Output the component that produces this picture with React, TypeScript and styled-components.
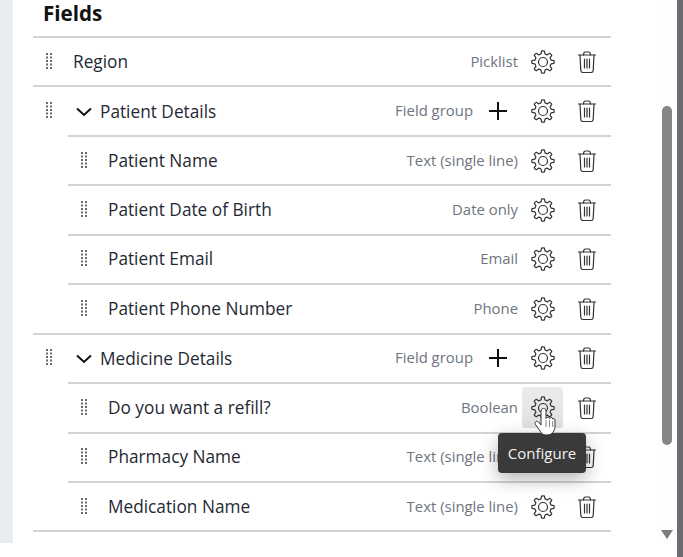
import React from 'react';
import styled, { createGlobalStyle } from 'styled-components';

const Global = createGlobalStyle`
  html, body { margin: 0; padding: 0; background: #fff; overflow: hidden; }
  body { font-family: "Open Sans", "Noto Sans", sans-serif; }
`;

const Page = styled.div`
  position: relative;
  width: 683px;
  height: 557px;
  display: flex;
  overflow: hidden;
  background: #fff;
`;
const SideBand = styled.div`
  width: 13px;
  height: 543px;
  flex: none;
  background: #e8edf2;
`;
const Main = styled.main`
  width: 598px;
  flex: none;
  padding: 0 0 0 20px;
  box-sizing: border-box;
`;
const Title = styled.h2`
  margin: 0;
  height: 36px;
  padding: 0 0 0 10px;
  font-size: 20.6px;
  line-height: 26px;
  font-weight: 700;
  color: #111;
`;
const List = styled.div`
  display: flex;
  flex-direction: column;
`;
const Row = styled.div<{ $nested?: boolean }>`
  height: 49.45px;
  box-sizing: border-box;
  margin-left: ${p => (p.$nested ? 35 : 0)}px;
  border-top: 2px solid #d3d3d3;
  display: flex;
  align-items: center;
  position: relative;
`;
const EndLine = styled.div`
  height: 2px;
  background: #d3d3d3;
`;
const Handle = styled.svg`
  width: 8px;
  height: 18px;
  flex: none;
  margin-left: 12px;
  margin-top: -2px;
`;
const Chevron = styled.svg`
  width: 18px;
  height: 10px;
  flex: none;
  margin-left: 21.500px;
  margin-top: 2px;
`;
const Name = styled.span<{ $group?: boolean }>`
  margin-left: ${p => (p.$group ? 7.5 : 20)}px;
  margin-top: ${p => (p.$group ? 2 : 0)}px;
  font-size: 17.25px;
  line-height: 24px;
  color: #1f2933;
  flex: 1;
  white-space: nowrap;
`;
const TypeLabel = styled.span`
  margin-top: -2px;
  font-size: 14.9px;
  line-height: 22px;
  color: #6f7580;
  white-space: nowrap;
`;
const Actions = styled.div`
  display: flex;
  align-items: center;
  flex: none;
  margin-right: 4px;
`;
const AddBtn = styled.span`
  width: 50px;
  display: flex;
  justify-content: center;
  margin-right: -5px;
`;
const IconBtn = styled.span<{ $hover?: boolean }>`
  width: 41px;
  height: 41px;
  border-radius: 3px;
  display: flex;
  align-items: center;
  justify-content: center;
  background: ${p => (p.$hover ? 'linear-gradient(#ececec, #e0e0e0)' : 'transparent')};
  margin-left: 4px;
  & + & {
    margin-left: 3px;
  }
`;
const Scrollbar = styled.div`
  position: relative;
  width: 18px;
  height: 544px;
  margin-left: 47px;
  flex: none;
  background: #fdfdfd;
`;
const Thumb = styled.div`
  position: absolute;
  left: 4px;
  top: 106px;
  width: 10px;
  height: 339px;
  border-radius: 5px;
  background: #858585;
`;
const Arrow = styled.div`
  position: absolute;
  left: 3px;
  top: 530px;
  width: 0;
  height: 0;
  border-left: 6px solid transparent;
  border-right: 6px solid transparent;
  border-top: 9px solid #7c7c7c;
`;
const DarkBand = styled.div`
  position: absolute;
  right: 0;
  top: 0;
  bottom: 0;
  width: 6px;
  background: #6c6d71;
`;
const Tooltip = styled.div`
  position: absolute;
  left: 498px;
  top: 433px;
  width: 88px;
  height: 40px;
  border-radius: 4px;
  background: #3a3a3a;
  color: #f2f2f2;
  font-size: 15px;
  display: flex;
  align-items: center;
  justify-content: center;
  box-shadow: 0 6px 18px rgba(0, 0, 0, 0.3);
`;
const Cursor = styled.svg`
  position: absolute;
  left: 534px;
  top: 408px;
  width: 22px;
  height: 28px;
`;

function gearPath(cx = 12, cy = 12, teeth = 8, ro = 11, ri = 8.4) {
  const pts: string[] = [];
  const step = (Math.PI * 2) / teeth;
  for (let i = 0; i < teeth; i++) {
    const a = i * step - Math.PI / 2;
    const p = (r: number, o: number) =>
      `${(cx + r * Math.cos(a + o * step)).toFixed(2)} ${(cy + r * Math.sin(a + o * step)).toFixed(2)}`;
    pts.push(`${i === 0 ? 'M' : 'L'}${p(ri, -0.3)}`);
    pts.push(`L${p(ro, -0.17)}`);
    pts.push(`Q${p(ro + 0.5, 0)} ${p(ro, 0.17)}`);
    pts.push(`L${p(ri, 0.3)}`);
    pts.push(`Q${p(ri - 0.5, 0.5)} ${p(ri, 0.7)}`);
  }
  return pts.join(' ') + 'Z';
}

const Gear = () => (
  <svg width="24" height="24" viewBox="0 0 24 24" fill="none" stroke="#333" strokeWidth="1.2" strokeLinejoin="round">
    <path d={gearPath()} />
    <circle cx="12" cy="12" r="4.500" />
  </svg>
);

const Trash = () => (
  <svg width="20" height="24" viewBox="0 0 20 24" fill="none" stroke="#333" strokeWidth="1.2" strokeLinecap="round" strokeLinejoin="round">
    <path d="M1.500 5h17" />
    <path d="M6.500 5c0-2 .6-3 2-3h3c1.400 0 2 1 2 3" />
    <path d="M3 5l.8 15.500c.1 1.300.8 2 2 2h8.400c1.200 0 1.900-.7 2-2L17 5" />
    <path d="M7.500 9v9M10 9v9M12.500 9v9" />
  </svg>
);

const Plus = () => (
  <svg width="20" height="20" viewBox="0 0 20 20" stroke="#111" strokeWidth="2">
    <path d="M1 10h18M10 1v18" />
  </svg>
);

const DragHandle = () => (
  <Handle viewBox="0 0 8 18">
    {[0, 1, 2, 3, 4].flatMap(r =>
      [1, 5].map(c => <rect key={`${r}-${c}`} x={c} y={r * 3.5 + 1} width="2" height="2" fill="#6a6a6a" />)
    )}
  </Handle>
);

type Field = { name: string; type: string; nested?: boolean; group?: boolean; hover?: boolean };
const fields: Field[] = [
  { name: 'Region', type: 'Picklist' },
  { name: 'Patient Details', type: 'Field group', group: true },
  { name: 'Patient Name', type: 'Text (single line)', nested: true },
  { name: 'Patient Date of Birth', type: 'Date only', nested: true },
  { name: 'Patient Email', type: 'Email', nested: true },
  { name: 'Patient Phone Number', type: 'Phone', nested: true },
  { name: 'Medicine Details', type: 'Field group', group: true },
  { name: 'Do you want a refill?', type: 'Boolean', nested: true, hover: true },
  { name: 'Pharmacy Name', type: 'Text (single line)', nested: true },
  { name: 'Medication Name', type: 'Text (single line)', nested: true },
];

export default function App() {
  return (
    <Page>
      <Global />
      <SideBand />
      <Main>
        <Title>Fields</Title>
        <List>
          {fields.map(f => (
            <Row key={f.name} $nested={f.nested}>
              <DragHandle />
              {f.group && (
                <Chevron viewBox="0 0 18 10" fill="none" stroke="#111" strokeWidth="2">
                  <path d="M2 1.500l7 6.500 7-6.500" />
                </Chevron>
              )}
              <Name $group={f.group}>{f.name}</Name>
              <TypeLabel>{f.type}</TypeLabel>
              <Actions>
                {f.group && <AddBtn><Plus /></AddBtn>}
                <IconBtn $hover={f.hover}><Gear /></IconBtn>
                <IconBtn><Trash /></IconBtn>
              </Actions>
            </Row>
          ))}
          <EndLine />
        </List>
      </Main>
      <Scrollbar>
        <Thumb />
        <Arrow />
      </Scrollbar>
      <DarkBand />
      <Tooltip>Configure</Tooltip>
      <Cursor viewBox="0 0 22 28">
        <path d="M7 3c0-3.500 5-3.500 5 0v7.500c.3-1.800 3.300-1.800 3.500 0 .3-1.500 3.200-1.300 3.200.5.400-.8 2.300-.6 2.300 1v6c0 5-3 9-8 9H12c-3 0-4.500-1.500-6-4L1.500 16.500c-1.500-2.500 1.500-4.500 3-2.500L7 17z" fill="#fff" stroke="#333" strokeWidth="1" strokeLinejoin="round" />
        <path d="M12 12v7M15.500 12v7M18.700 13v6" stroke="#666" strokeWidth=".8" fill="none" />
      </Cursor>
    </Page>
  );
}
